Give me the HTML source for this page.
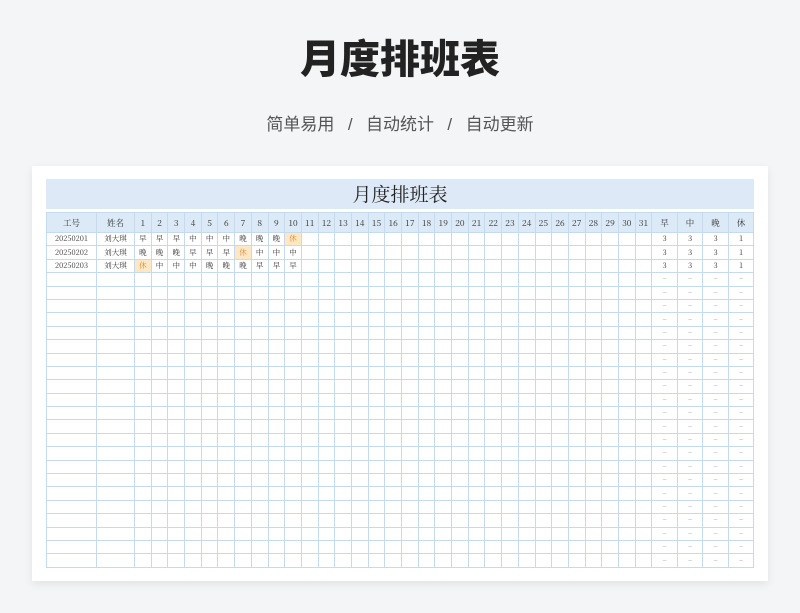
<!DOCTYPE html>
<html><head><meta charset="utf-8"><style>
body{margin:0;width:800px;height:613px;background:#f3f5f7;font-family:"Liberation Sans","Noto Sans CJK SC",sans-serif;overflow:hidden;position:relative}
h1{position:absolute;top:34px;left:0;width:800px;text-align:center;margin:0;font-size:40px;font-weight:900;color:#222;line-height:52px}
.sub{position:absolute;top:112px;left:0;width:800px;text-align:center;font-size:17px;color:#555;line-height:26px;word-spacing:2px}
.card{position:absolute;left:32px;top:166px;width:736px;height:415px;background:#fff;box-shadow:0 3px 8px rgba(0,0,0,.08)}
.band{position:absolute;left:14px;top:13px;width:708px;height:30px;background:#dde9f6;text-align:center;font-family:"Noto Serif CJK SC",serif;font-size:19px;line-height:30px;color:#222}
table{position:absolute;left:14px;top:46px;border-collapse:collapse;table-layout:fixed;font-family:"Noto Serif CJK SC","Liberation Serif",serif;color:#333}
td{border:1px solid #c6daee;height:12.4px;padding:0;text-align:center;font-size:7.5px;line-height:12px;overflow:hidden;white-space:nowrap}
tr.h td{background:#dce9f6;height:19px;font-size:8.5px}
.x{background:#fde7c4;color:#e08a2a}
.d{color:#999}
</style></head><body>
<h1>月度排班表</h1>
<div class="sub">简单易用 &nbsp;/&nbsp; 自动统计 &nbsp;/&nbsp; 自动更新</div>
<div class="card"><div class="band">月度排班表</div>
<table id="t"><colgroup><col style="width:50px"><col style="width:38px"></colgroup></table>
</div>
<script>
var t=document.getElementById('t'),cg=t.querySelector('colgroup');
for(var i=0;i<31;i++){var c=document.createElement('col');c.style.width='16.7px';cg.appendChild(c);}
for(var i=0;i<4;i++){var c=document.createElement('col');c.style.width='25.5px';cg.appendChild(c);}
var h='<tr class="h"><td>工号</td><td>姓名</td>';for(var i=1;i<=31;i++)h+='<td>'+i+'</td>';h+='<td>早</td><td>中</td><td>晚</td><td>休</td></tr>';
var data=[['20250201','早早早中中中晚晚晚休'],['20250202','晚晚晚早早早休中中中'],['20250203','休中中中晚晚晚早早早']];
for(var r=0;r<25;r++){h+='<tr>';if(r<3){h+='<td>'+data[r][0]+'</td><td>刘大琪</td>';var s=data[r][1];for(var i=0;i<31;i++){var ch=s[i]||'';h+='<td'+(ch=='休'?' class="x"':'')+'>'+ch+'</td>';}h+='<td>3</td><td>3</td><td>3</td><td>1</td>';}else{h+='<td></td><td></td>';for(var i=0;i<31;i++)h+='<td></td>';h+='<td class="d">–</td><td class="d">–</td><td class="d">–</td><td class="d">–</td>';}h+='</tr>';}
t.innerHTML+=h;
</script>
</body></html>
